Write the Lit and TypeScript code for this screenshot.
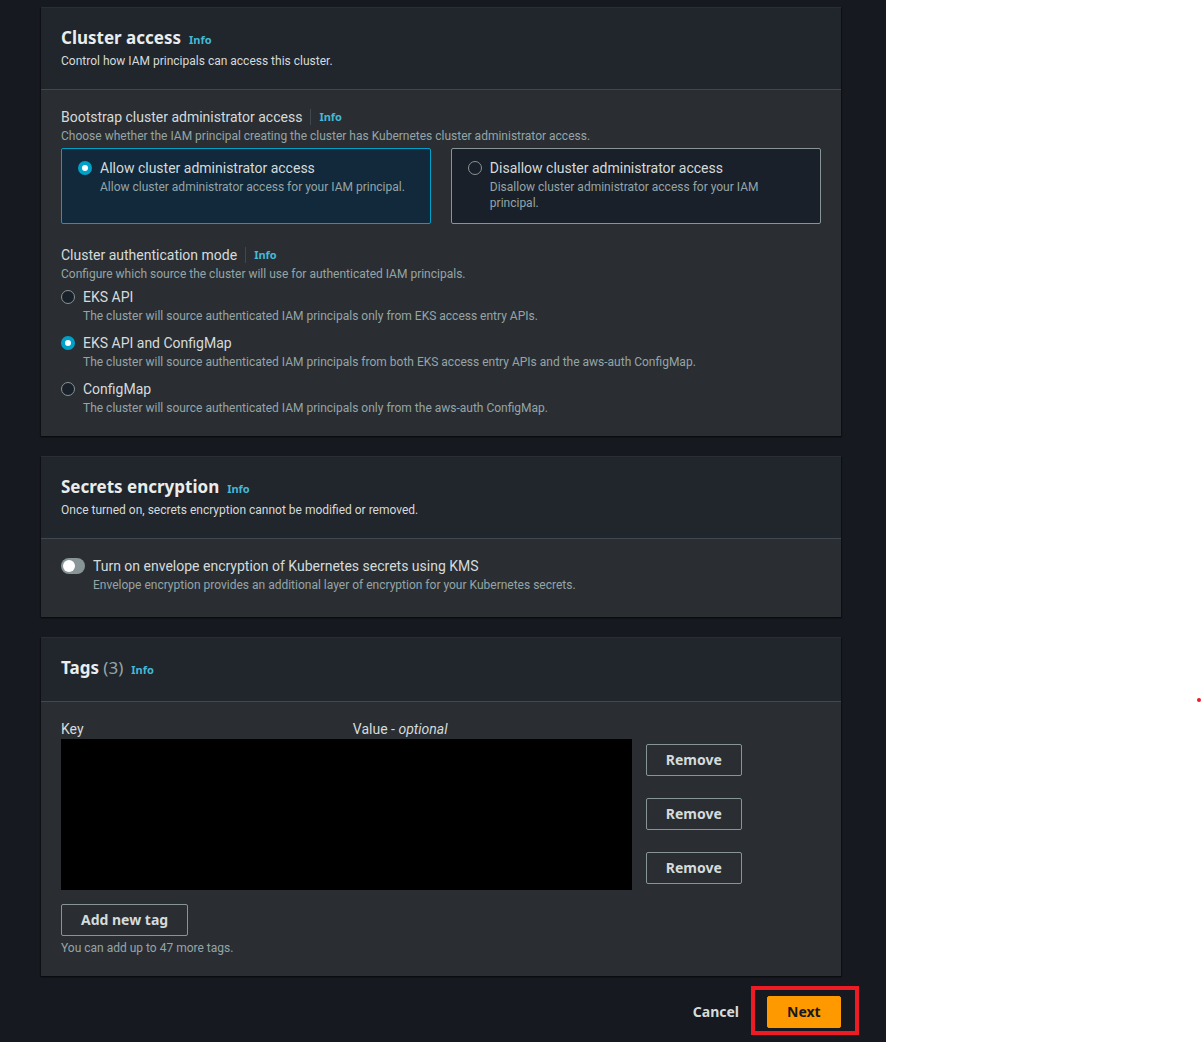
import { LitElement, html, css, nothing, type TemplateResult } from "lit";
import { customElement, property, state } from "lit/decorators.js";

interface Choice {
  value: string;
  label: string;
  hint: string;
}

const ACCESS: Choice[] = [
  {
    value: "allow",
    label: "Allow cluster administrator access",
    hint: "Allow cluster administrator access for your IAM principal.",
  },
  {
    value: "disallow",
    label: "Disallow cluster administrator access",
    hint: "Disallow cluster administrator access for your IAM principal.",
  },
];

const MODES: Choice[] = [
  {
    value: "api",
    label: "EKS API",
    hint: "The cluster will source authenticated IAM principals only from EKS access entry APIs.",
  },
  {
    value: "api-configmap",
    label: "EKS API and ConfigMap",
    hint: "The cluster will source authenticated IAM principals from both EKS access entry APIs and the aws-auth ConfigMap.",
  },
  {
    value: "configmap",
    label: "ConfigMap",
    hint: "The cluster will source authenticated IAM principals only from the aws-auth ConfigMap.",
  },
];

const shared = css`
  * {
    box-sizing: border-box;
  }
  .info {
    font: 700 11px/16px "Noto Sans", "Open Sans", sans-serif;
    color: #44b9d6;
    text-decoration: none;
  }
`;

@customElement("console-card")
export class ConsoleCard extends LitElement {
  static styles = [
    shared,
    css`
      :host {
        display: block;
      }
      .card {
        background: #2a2e33;
        box-shadow: 0 1px 1px #0a0c10, 1px 1px 1px #101217, -1px 1px 1px #101217;
      }
      .head {
        min-height: 65px;
        padding: 18px 20px 20px;
        background: #21252c;
        border-top: 1px solid #2a2e33;
        border-bottom: 1px solid #414750;
      }
      .line {
        display: flex;
        align-items: baseline;
        gap: 8px;
      }
      h2 {
        margin: 0;
        font: 700 17px/24px "Noto Sans", "Open Sans", sans-serif;
        color: #eaeded;
      }
      .count {
        font-weight: 400;
        color: #95a5a6;
      }
      p {
        margin: 3px 0 0;
        font-size: 12px;
        line-height: 16px;
        color: #d5dbdb;
      }
      .body {
        padding: 16px 20px 20px;
      }
    `,
  ];

  @property() heading = "";
  @property() count = "";
  @property() description = "";

  render() {
    return html`
      <section class="card">
        <header class="head">
          <div class="line">
            <h2>${this.heading}${this.count ? html` <span class="count">(${this.count})</span>` : nothing}</h2>
            <a class="info" href="#info">Info</a>
          </div>
          ${this.description ? html`<p>${this.description}</p>` : nothing}
        </header>
        <div class="body"><slot></slot></div>
      </section>
    `;
  }
}

@customElement("app-root")
export class AppRoot extends LitElement {
  static styles = [
    shared,
    css`
      :host {
        display: block;
        font: 14px/22px Roboto, "Open Sans", sans-serif;
        color: #d5dbdb;
      }
      .page {
        display: grid;
        grid-template-columns: minmax(0, 14fr) minmax(0, 5fr);
        min-height: 100vh;
        background: #fff;
      }
      .console {
        padding: 7px 45px 14px 41px;
        background: #16191f;
      }
      .margin {
        position: relative;
      }
      .dot {
        position: absolute;
        top: 698px;
        right: 1px;
        width: 4px;
        height: 4px;
        border-radius: 50%;
        background: #ed1c24;
      }
      .stack {
        display: grid;
        gap: 20px;
      }
      fieldset {
        min-width: 0;
        margin: 0;
        padding: 0;
        border: 0;
      }
      legend {
        display: flex;
        align-items: center;
        padding: 0;
      }
      legend .info {
        margin-left: 8px;
        padding-left: 8px;
        border-left: 1px solid #414750;
      }
      .hint {
        display: block;
        font-size: 12px;
        line-height: 16px;
        color: #95a5a6;
      }
      .tiles {
        display: grid;
        grid-template-columns: repeat(2, minmax(0, 1fr));
        gap: 20px;
        margin-top: 4px;
      }
      .tile {
        padding: 8px 16px 12px;
        border: 1px solid #879596;
        border-radius: 2px;
        background: #1a2029;
      }
      .tile.on {
        border-color: #00a1c9;
        background: #12293b;
      }
      .modes {
        display: grid;
        gap: 8px;
        margin-top: 4px;
      }
      .choice {
        display: flex;
        align-items: flex-start;
        gap: 8px;
      }
      .text {
        display: block;
        min-width: 0;
      }
      .name {
        display: block;
      }
      input[type="radio"] {
        appearance: none;
        flex: none;
        width: 14px;
        height: 14px;
        margin: 4px 0;
        border: 1px solid #879596;
        border-radius: 50%;
        background: #1a2029;
      }
      input[type="radio"]:checked {
        border: 4px solid #00a1c9;
        background: #fff;
      }
      .switch {
        appearance: none;
        flex: none;
        display: flex;
        align-items: center;
        width: 24px;
        height: 16px;
        margin: 3px 0;
        padding: 0 2px;
        border-radius: 8px;
        background: #879596;
      }
      .switch::before {
        content: "";
        width: 12px;
        height: 12px;
        border-radius: 50%;
        background: #fff;
      }
      .switch:checked {
        justify-content: flex-end;
        background: #00a1c9;
      }
      .encryption {
        padding-bottom: 4px;
      }
      .tags {
        display: grid;
        grid-template-columns: minmax(0, 571fr) minmax(0, 175fr);
        column-gap: 14px;
      }
      .columns {
        display: grid;
        grid-template-columns: repeat(2, minmax(0, 1fr));
        column-gap: 13px;
        grid-column: 1 / 2;
        padding-top: 1px;
        line-height: 20px;
      }
      .redacted {
        grid-column: 1 / 2;
        background: #000;
      }
      .removes {
        display: flex;
        flex-direction: column;
        align-items: flex-start;
        gap: 22px;
        padding: 5px 0 6px;
      }
      button {
        height: 32px;
        padding: 0 19px;
        border: 1px solid #879596;
        border-radius: 2px;
        background: transparent;
        font: 700 14px/20px "Noto Sans", "Open Sans", sans-serif;
        color: #d5dbdb;
      }
      .add {
        margin: 14px 0 4px;
      }
      .actions {
        display: flex;
        justify-content: flex-end;
        gap: 8px;
        margin-top: 20px;
      }
      .cancel {
        border-color: transparent;
      }
      .next {
        border-color: #f90;
        background: #f90;
        color: #16191f;
      }
      .marked {
        position: relative;
      }
      .mark {
        position: absolute;
        inset: -10px -18px -7px -16px;
        border: 4px solid #ed1c24;
        pointer-events: none;
      }
    `,
  ];

  @state() private access = "allow";
  @state() private mode = "api-configmap";

  private choice(group: string, item: Choice, picked: string, pick: (v: string) => void, tile = false): TemplateResult {
    const on = item.value === picked;
    return html`
      <label class="choice ${tile ? "tile" : ""} ${on ? "on" : ""}">
        <input type="radio" name=${group} .value=${item.value} .checked=${on} @change=${() => pick(item.value)} />
        <span class="text"><span class="name">${item.label}</span><span class="hint">${item.hint}</span></span>
      </label>
    `;
  }

  render() {
    return html`
      <div class="page">
        <main class="console">
          <div class="stack">
            <console-card heading="Cluster access" description="Control how IAM principals can access this cluster.">
              <div class="stack">
                <fieldset>
                  <legend>Bootstrap cluster administrator access<a class="info" href="#bootstrap">Info</a></legend>
                  <span class="hint">Choose whether the IAM principal creating the cluster has Kubernetes cluster administrator access.</span>
                  <div class="tiles">
                    ${ACCESS.map((c) => this.choice("access", c, this.access, (v) => (this.access = v), true))}
                  </div>
                </fieldset>
                <fieldset>
                  <legend>Cluster authentication mode<a class="info" href="#mode">Info</a></legend>
                  <span class="hint">Configure which source the cluster will use for authenticated IAM principals.</span>
                  <div class="modes">
                    ${MODES.map((c) => this.choice("mode", c, this.mode, (v) => (this.mode = v)))}
                  </div>
                </fieldset>
              </div>
            </console-card>

            <console-card
              heading="Secrets encryption"
              description="Once turned on, secrets encryption cannot be modified or removed."
            >
              <label class="choice encryption">
                <input class="switch" type="checkbox" role="switch" />
                <span class="text">
                  <span class="name">Turn on envelope encryption of Kubernetes secrets using KMS</span>
                  <span class="hint">Envelope encryption provides an additional layer of encryption for your Kubernetes secrets.</span>
                </span>
              </label>
            </console-card>

            <console-card heading="Tags" count="3">
              <div class="tags">
                <div class="columns"><span>Key</span><span>Value - <em>optional</em></span></div>
                <div class="redacted"></div>
                <div class="removes">
                  ${[1, 2, 3].map(() => html`<button type="button">Remove</button>`)}
                </div>
              </div>
              <button class="add" type="button">Add new tag</button>
              <span class="hint">You can add up to 47 more tags.</span>
            </console-card>
          </div>

          <div class="actions">
            <button class="cancel" type="button">Cancel</button>
            <div class="marked">
              <button class="next" type="button">Next</button>
              <span class="mark"></span>
            </div>
          </div>
        </main>
        <aside class="margin"><span class="dot"></span></aside>
      </div>
    `;
  }
}
